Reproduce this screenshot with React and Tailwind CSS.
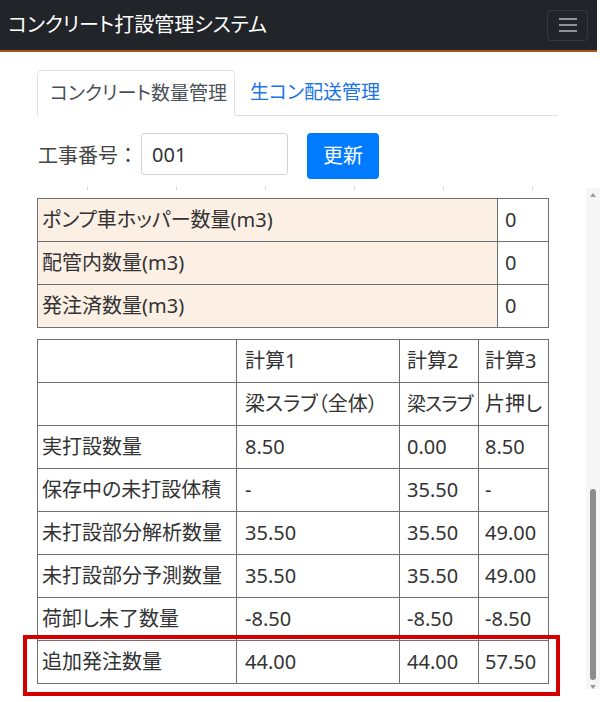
const rows1 = [
  { label: "ポンプ車ホッパー数量(m3)", value: "0" },
  { label: "配管内数量(m3)", value: "0" },
  { label: "発注済数量(m3)", value: "0" },
];

const rows2 = [
  ["", "計算1", "計算2", "計算3"],
  ["", "梁スラブ（全体）", "梁スラブ", "片押し"],
  ["実打設数量", "8.50", "0.00", "8.50"],
  ["保存中の未打設体積", "-", "35.50", "-"],
  ["未打設部分解析数量", "35.50", "35.50", "49.00"],
  ["未打設部分予測数量", "35.50", "35.50", "49.00"],
  ["荷卸し未了数量", "-8.50", "-8.50", "-8.50"],
  ["追加発注数量", "44.00", "44.00", "57.50"],
];

const cell = "border border-[#6f6f6f] h-[43px] p-0 align-middle whitespace-nowrap";

const Scrollbar = () => (
  <div className="w-[14px] mt-[136px] bg-[#f6f6f6] flex flex-col items-center">
    <div className="mt-[5px] w-0 h-0 border-l-[3px] border-r-[3px] border-b-[4px] border-l-transparent border-r-transparent border-b-[#9a9a9a]" />
    <div className="mt-[292px] w-[6px] h-[191px] rounded-full bg-[#8c8c8c]" />
    <div className="mt-[5px] w-0 h-0 border-l-[3px] border-r-[3px] border-t-[4px] border-l-transparent border-r-transparent border-t-[#9a9a9a]" />
  </div>
);

export default function App() {
  return (
    <div className="w-[600px] h-[702px] overflow-hidden bg-white font-['Noto_Sans','Noto_Sans_CJK_JP',sans-serif] [font-feature-settings:'palt'] text-[#333]">
      <nav className="w-[597px] h-[52px] bg-[#212529] border-b-2 border-[#a9551c] flex items-center justify-between pl-[8px] pr-[9px]">
        <span className="text-white text-[20px] leading-none">コンクリート打設管理システム</span>
        <button className="w-[41px] h-[31px] border border-white/10 rounded-[4px] flex flex-col items-center justify-center gap-[4px]">
          <span className="w-[18px] h-[2px] bg-[#8f9296]" />
          <span className="w-[18px] h-[2px] bg-[#8f9296]" />
          <span className="w-[18px] h-[2px] bg-[#8f9296]" />
        </button>
      </nav>

      <div className="flex">
        <main className="w-[586px] pl-[37px]">
          {/* タブ */}
          <ul className="mt-[18px] w-[521px] h-[46px] flex border-b border-[#dee2e6]">
            <li className="w-[198px] h-[46px] -mb-px bg-white border border-[#dee2e6] border-b-white rounded-t-[5px] flex items-center pl-[12px] text-[19px] text-[#495057]">
              コンクリート数量管理
            </li>
            <li className="h-[45px] flex items-center pl-[15px] text-[19px] text-[#1a73e8]">
              生コン配送管理
            </li>
          </ul>

          {/* 工事番号 */}
          <div className="mt-[17px] flex items-start">
            <span className="self-center pl-[1px] text-[20px] text-[#444] [font-feature-settings:normal]">工事番号：</span>
            <input
              className="ml-[3px] w-[147px] h-[42px] border border-[#ced4da] rounded-[3px] px-[10px] text-[20px] text-[#333] outline-none"
              defaultValue="001"
            />
            <button className="ml-[19px] w-[72px] h-[46px] bg-[#007bff] rounded-[4px] text-white text-[20px]">
              更新
            </button>
          </div>

          <div className="mt-[8px] h-[3px] flex gap-[88px] pl-[50px]">
            {[0, 1, 2, 3, 4, 5].map((i) => (
              <span key={i} className="w-px h-[3px] bg-[#cfcfcf]" />
            ))}
          </div>

          {/* ポンプ車・配管・発注 */}
          <table className="mt-[8px] w-[511px] border-collapse text-[20px] table-fixed">
            <colgroup>
              <col className="w-[460px]" />
              <col className="w-[51px]" />
            </colgroup>
            <tbody>
              {rows1.map((r) => (
                <tr key={r.label}>
                  <td className={`${cell} bg-[#fcefe4] pl-[4px]`}>{r.label}</td>
                  <td className={`${cell} pl-[7px]`}>{r.value}</td>
                </tr>
              ))}
            </tbody>
          </table>

          {/* 計算結果 */}
          <div className="relative mt-[11px]">
            <table className="w-[511px] border-collapse text-[20px] table-fixed">
              <colgroup>
                <col className="w-[199px]" />
                <col className="w-[163px]" />
                <col className="w-[79px]" />
                <col className="w-[70px]" />
              </colgroup>
              <tbody>
                {rows2.map((r, i) => (
                  <tr key={i}>
                    <td className={`${cell} pl-[4px]`}>{r[0]}</td>
                    <td className={`${cell} pl-[8px]`}>{r[1]}</td>
                    <td className={`${cell} pl-[7px] ${i === 1 ? "text-[19px] tracking-[-1px]" : ""}`}>{r[2]}</td>
                    <td className={`${cell} pl-[6px]`}>{r[3]}</td>
                  </tr>
                ))}
              </tbody>
            </table>
            <div className="absolute left-[-14px] top-[296px] w-[537px] h-[61px] border-[4px] border-[#d40000]" />
          </div>
        </main>
        <Scrollbar />
      </div>
    </div>
  );
}
